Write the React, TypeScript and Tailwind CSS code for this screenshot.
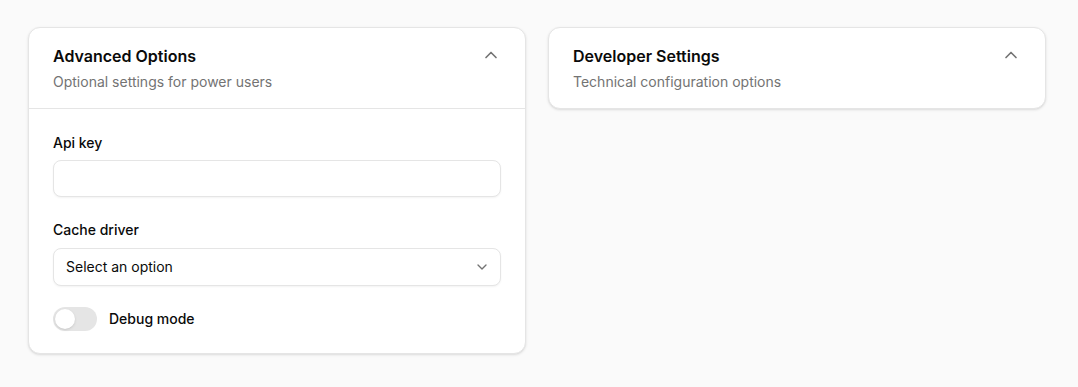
import React from "react";

function ChevronUp({ className }: { className?: string }) {
  return (
    <svg className={className} viewBox="0 0 24 24" fill="none" stroke="currentColor" strokeWidth={2} strokeLinecap="round" strokeLinejoin="round">
      <path d="m18 15-6-6-6 6" />
    </svg>
  );
}

function ChevronDown({ className }: { className?: string }) {
  return (
    <svg className={className} viewBox="0 0 24 24" fill="none" stroke="currentColor" strokeWidth={2} strokeLinecap="round" strokeLinejoin="round">
      <path d="m6 9 6 6 6-6" />
    </svg>
  );
}

function Header({ title, subtitle }: { title: string; subtitle: string }) {
  return (
    <div className="flex items-start justify-between px-6 py-4">
      <div className="flex flex-col gap-1">
        <h3 className="text-base leading-6 font-semibold text-[#0a0a0a]">{title}</h3>
        <p className="text-sm leading-5 text-[#737373]">{subtitle}</p>
      </div>
      <ChevronUp className="w-5 h-5 mt-[1px] text-[#737373]" />
    </div>
  );
}

export default function App() {
  return (
    <div
      className="min-h-screen bg-[#fafafa] pt-[27px] pl-[28px] flex items-start gap-[22px]"
      style={{ fontFamily: "Inter, 'Noto Sans', sans-serif" }}
    >
      <div className="w-[498px] bg-white rounded-xl border border-[#e5e5e5] shadow-sm">
        <Header title="Advanced Options" subtitle="Optional settings for power users" />
        <div className="border-t border-[#e5e5e5] px-6 pt-6 pb-[22px] flex flex-col">
          <div className="flex flex-col gap-[7px]">
            <label className="text-sm leading-5 font-medium text-[#0a0a0a]">Api key</label>
            <input className="h-[37px] w-full rounded-lg border border-[#e5e5e5] bg-white px-3 text-sm shadow-xs outline-none" />
          </div>
          <div className="flex flex-col gap-2 mt-[23px]">
            <label className="text-sm leading-5 font-medium text-[#0a0a0a]">Cache driver</label>
            <div className="h-[38px] w-full rounded-lg border border-[#e5e5e5] bg-white pl-3 pr-[10px] flex items-center justify-between shadow-xs">
              <span className="text-sm text-[#0a0a0a]">Select an option</span>
              <ChevronDown className="w-4 h-4 text-[#737373]" />
            </div>
          </div>
          <div className="flex items-center gap-3 mt-[21px]">
            <div className="w-11 h-6 rounded-full bg-[#e5e5e5] flex items-center px-[2px]">
              <div className="w-5 h-5 rounded-full bg-white shadow-sm" />
            </div>
            <span className="text-sm font-medium text-[#0a0a0a]">Debug mode</span>
          </div>
        </div>
      </div>
      <div className="w-[498px] bg-white rounded-xl border border-[#e5e5e5] shadow-sm">
        <Header title="Developer Settings" subtitle="Technical configuration options" />
      </div>
    </div>
  );
}
